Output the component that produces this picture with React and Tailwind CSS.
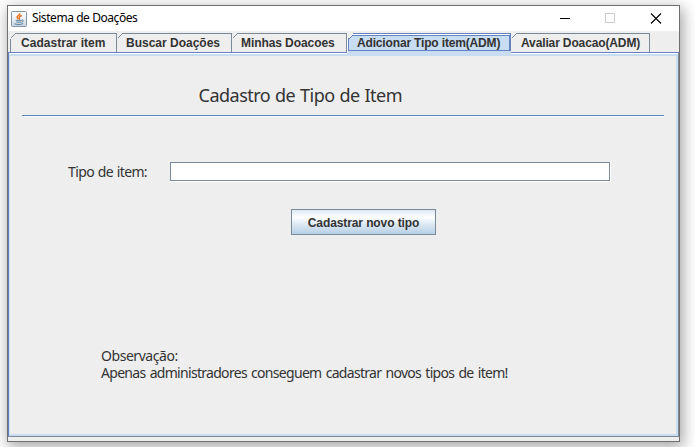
import React from "react";

const tabs = [
  { label: "Cadastrar item", width: "w-[107px]", text: "ml-[11px] tracking-[0.03px]", first: true },
  { label: "Buscar Doações", width: "w-[115px]", text: "ml-[9px]" },
  { label: "Minhas Doacoes", width: "w-[115px]", text: "ml-[9px] tracking-[-0.08px]" },
  { label: "Adicionar Tipo item(ADM)", width: "w-[164px]", text: "ml-[10px] tracking-[-0.16px]", selected: true },
  { label: "Avaliar Doacao(ADM)", width: "w-[139px]", text: "ml-[10px] tracking-[-0.13px]" },
];

function JavaIcon() {
  return (
    <svg width="16" height="16" viewBox="0 0 16 16" fill="none">
      <defs>
        <linearGradient id="tile" x1="0" y1="0" x2="0" y2="1">
          <stop offset="0" stopColor="#fff" />
          <stop offset="0.5" stopColor="#eaf0f5" />
          <stop offset="1" stopColor="#c5d2de" />
        </linearGradient>
      </defs>
      <rect x="0.5" y="0.5" width="15" height="15" rx="1" fill="url(#tile)" stroke="#8296a8" />
      <path d="M8.8 2.3C9.6 4 5.6 4.8 6 6.3c.2.7 1 1 1.3 1.9M10.8 4.5C9 5 7.8 5.7 8.3 6.6c.4.7.5 1.1-.3 1.8" stroke="#e8701a" strokeWidth="1.4" />
      <path d="M4.6 9.3h6M5.3 11.1h4.9M3.6 12.8c2.2 1 7 .8 8.6-.3M10.6 9.1c2.4-.6 2.4 1.5-.2 2.1" stroke="#5b7f9b" strokeWidth="1" />
    </svg>
  );
}

function Tab({ label, width, text, first, selected }) {
  if (selected) {
    return (
      <div className={`relative h-[23px] ${width} bg-[#c8ddf2]`}>
        <svg className="absolute left-0 top-0" width="164" height="23" shapeRendering="crispEdges" fill="none">
          <path d="M0 0h6L1 5v15H0z" fill="#eeeeee" />
          <path d="M0 0h1v20H0z" fill="#ffffff" />
          <path d="M1.5 18V5.5L6.5.5H163.5V18" stroke="#6382bf" />
          <path d="M2 5.5L6 1.5H162" stroke="#ffffff" />
          <path d="M1.5 6.5L5.5 2.5H162.5V17.5H1.5z" stroke="#6382bf" />
        </svg>
        <span className={`relative block whitespace-nowrap ${text}`}>{label}</span>
      </div>
    );
  }
  return (
    <div className={`relative h-[19px] ${width} border-r border-t border-[#7a8a99] ${first ? "border-l" : ""}`}>
      <svg className={`absolute -top-px ${first ? "-left-px" : "left-0"}`} width="6" height="6" shapeRendering="crispEdges">
        <path d="M0 0h6L0 6z" fill="#eeeeee" />
        <path d="M0.5 5.5L5.5 .5" stroke="#7a8a99" />
      </svg>
      <span className={`-mt-px block whitespace-nowrap ${first ? "-translate-x-px" : ""} ${text}`}>{label}</span>
    </div>
  );
}

export default function App() {
  return (
    <div className="h-[447px] w-[695px] overflow-hidden bg-white pl-[7px] pt-[5px] font-['Noto_Sans',sans-serif] text-[#333333]">
      <div className="flex h-[437px] w-[673px] flex-col border border-[#6f6f6f] bg-[#eeeeee] shadow-[2px_4px_14px_1px_rgba(0,0,0,0.36)]">
        <header className="flex h-[25px] shrink-0 items-center bg-white pl-[3px] text-black">
          <JavaIcon />
          <span className="ml-[5px] -mt-px whitespace-nowrap text-[12px] leading-4 tracking-[-0.43px]">Sistema de Doações</span>
          <svg className="ml-auto mr-[16px]" width="103" height="12" fill="none">
            <path d="M0 5.5h10" stroke="#000" shapeRendering="crispEdges" />
            <path d="M45.5 .5h9v9h-9z" stroke="#cccccc" shapeRendering="crispEdges" />
            <path d="M91 .5l10 10M101 .5l-10 10" stroke="#000" strokeWidth="1.1" />
          </svg>
        </header>
        <nav className="z-10 -mb-[4px] mt-[2px] flex h-[23px] shrink-0 items-start pl-[2px] font-['Liberation_Sans',Arial,sans-serif] text-[12px] font-bold leading-[20px]">
          {tabs.map((tab) => <Tab key={tab.label} {...tab} />)}
        </nav>
        <main className="flex h-[385px] shrink-0 flex-col border border-b-[#7a8a99] border-l-[#6382bf] border-r-[#7a8a99] border-t-[#6382bf]">
          <div className="h-px shrink-0 bg-white" />
          <div className="flex flex-1 flex-col border-b-2 border-l border-r-2 border-t-2 border-[#c8ddf2] pl-[12px]">
            <h1 className="ml-[176.5px] mt-[27px] whitespace-nowrap text-[18px] leading-6 tracking-[-0.5px] [word-spacing:0.6px]">Cadastro de Tipo de Item</h1>
            <div className="mt-[8px] h-[2px] w-[642px] border-b border-t border-b-white border-t-[#6382bf]" />
            <div className="ml-[46px] mt-[45px] flex h-5 items-start">
              <label htmlFor="tipo" className="w-[102px] whitespace-nowrap text-[14px] leading-5 tracking-[-0.62px] [word-spacing:0.7px]">Tipo de item:</label>
              <div className="border-b border-r border-white">
                <input id="tipo" className="block h-[19px] w-[440px] border border-[#7a8a99] bg-white outline-none" />
              </div>
            </div>
            <button className="ml-[269px] mt-[27px] h-[26px] w-[145px] shrink-0 border border-[#7a8a99] bg-linear-[180deg,#dde8f3_0%,#ffffff_30%,#dce8f3_60%,#b8cfe5_100%] font-['Liberation_Sans',Arial,sans-serif] text-[12px] font-bold leading-[26px] tracking-[-0.1px]">Cadastrar novo tipo</button>
            <div className="ml-[79px] mt-[112px] whitespace-nowrap text-[14px] leading-[17px] tracking-[-0.7px] [word-spacing:1.25px]">
              <p className="tracking-[-0.45px]">Observação:</p>
              <p>Apenas administradores conseguem cadastrar novos tipos de item!</p>
            </div>
          </div>
        </main>
      </div>
    </div>
  );
}
